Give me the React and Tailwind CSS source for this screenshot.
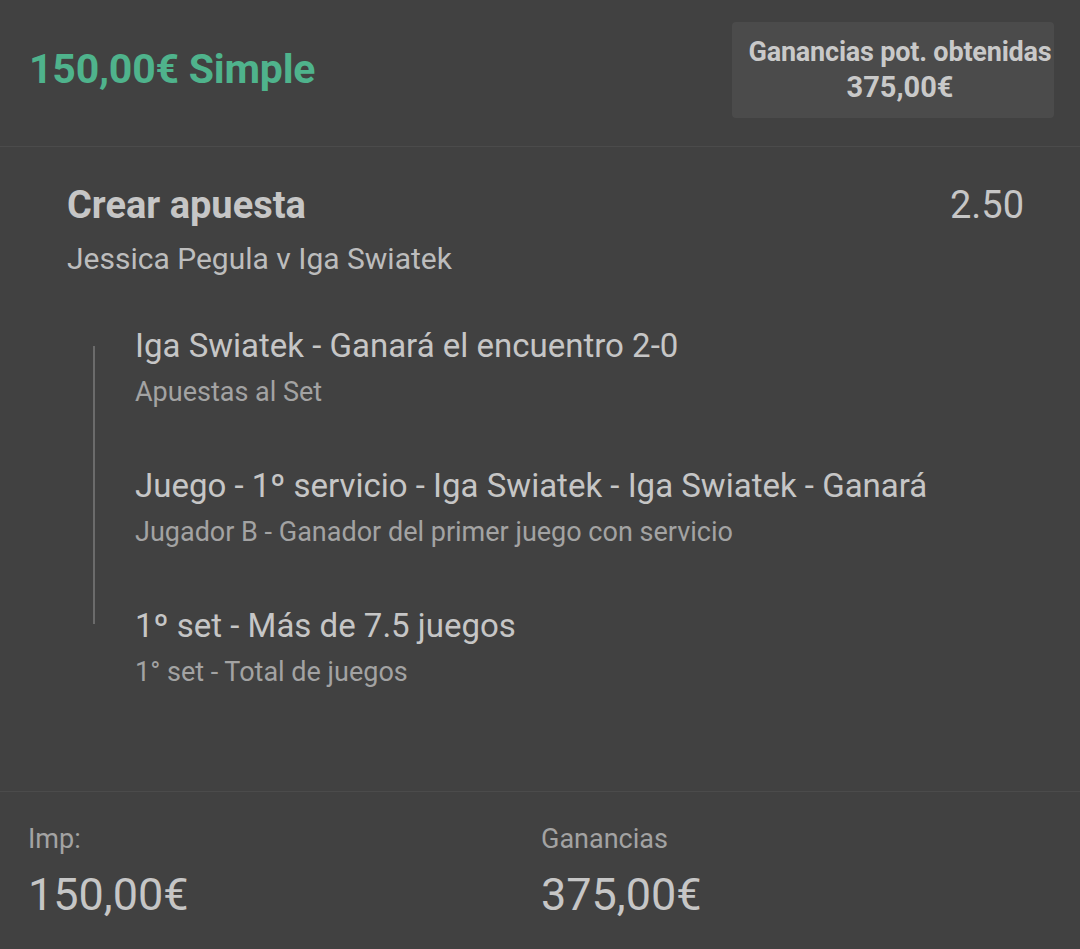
import React from 'react';

const selections = [
    { title: 'Iga Swiatek - Ganará el encuentro 2-0', market: 'Apuestas al Set' },
    { title: 'Juego - 1º servicio - Iga Swiatek - Iga Swiatek - Ganará', market: 'Jugador B - Ganador del primer juego con servicio' },
    { title: '1º set - Más de 7.5 juegos', market: '1° set - Total de juegos' },
];

const App = () => {
    return (
        <div className="w-[1080px] h-[949px] bg-[#414141] flex flex-col overflow-hidden" style={{ fontFamily: 'Roboto, "Noto Sans", sans-serif' }}>
            {/* cabecera */}
            <div className="h-[147px] flex items-start justify-between border-b border-[#4b4b4b]">
                <div className="pl-[29px] pt-[45px] text-[41px] leading-[48px] font-bold text-[#4fb38c] tracking-[-0.2px]">
                    150,00€ Simple
                </div>
                <div className="mt-[22px] mr-[26px] w-[322px] h-[96px] pl-[14px] rounded bg-[#4b4b4b] flex flex-col items-center justify-center text-[#c9c9c9] font-bold leading-[35px]">
                    <span className="text-[27px] tracking-[-0.2px] whitespace-nowrap">Ganancias pot. obtenidas</span>
                    <span className="text-[29px]">375,00€</span>
                </div>
            </div>

            {/* apuesta */}
            <div className="flex-1 pl-[67px] pr-[56px] pt-[36px]">
                <div className="flex items-start justify-between">
                    <h2 className="text-[38px] font-bold text-[#c6c6c6] leading-[44px]">Crear apuesta</h2>
                    <span className="text-[38px] text-[#c6c6c6] leading-[44px]">2.50</span>
                </div>
                <p className="mt-[14px] text-[30px] text-[#bdbdbd] leading-[36px]">Jessica Pegula v Iga Swiatek</p>

                <div className="mt-[49px] flex">
                    <div className="ml-[26px] mt-[20px] h-[278px] w-[2px] bg-[#6b6b6b]" />
                    <div className="ml-[40px] flex flex-col gap-[59px]">
                        {selections.map((s, i) => (
                            <div key={i} className="flex flex-col">
                                <span className="text-[33px] text-[#c6c6c6] leading-[40px] whitespace-nowrap">{s.title}</span>
                                <span className="mt-[11px] text-[27px] text-[#a3a3a3] leading-[30px]">{s.market}</span>
                            </div>
                        ))}
                    </div>
                </div>
            </div>

            {/* pie */}
            <div className="h-[158px] border-t border-[#4b4b4b] flex pt-[30px]">
                <div className="w-[541px] pl-[28px] flex flex-col">
                    <span className="text-[27px] text-[#a3a3a3] leading-[34px]">Imp:</span>
                    <span className="mt-[12px] text-[45px] text-[#c6c6c6] leading-[54px]">150,00€</span>
                </div>
                <div className="flex flex-col">
                    <span className="text-[27px] text-[#a3a3a3] leading-[34px]">Ganancias</span>
                    <span className="mt-[12px] text-[45px] text-[#c6c6c6] leading-[54px]">375,00€</span>
                </div>
            </div>
        </div>
    );
};

export default App;
